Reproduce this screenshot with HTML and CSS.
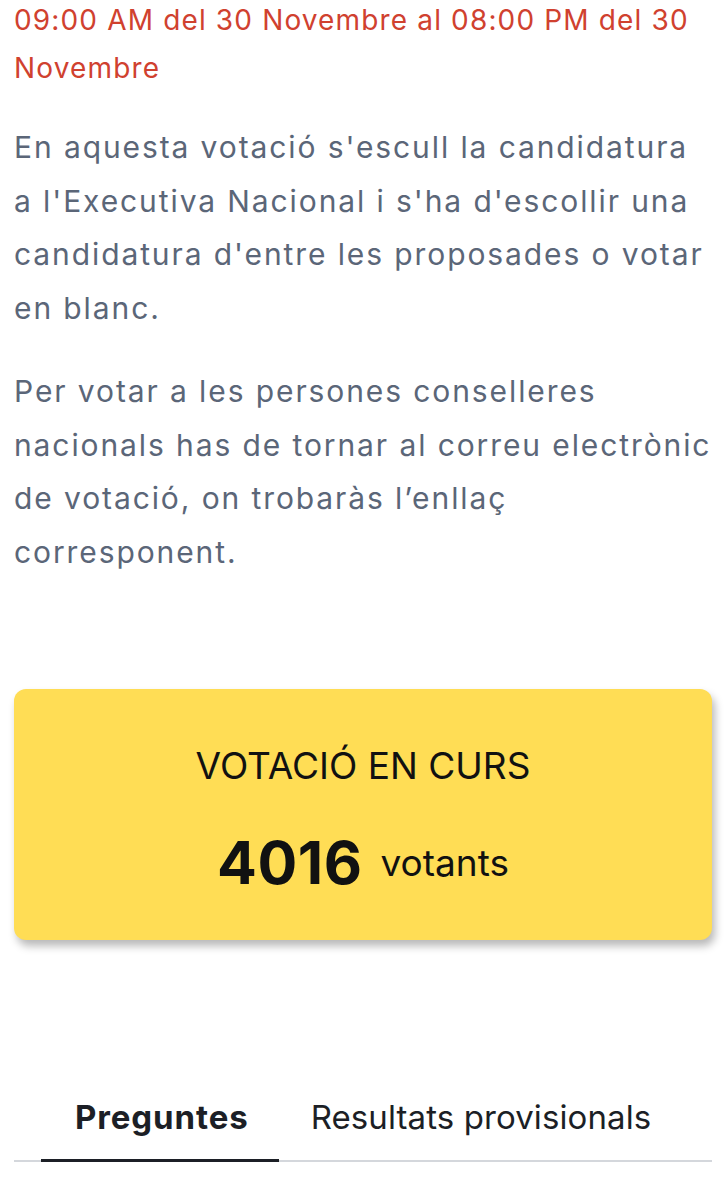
FILE: index.html
```html
<!DOCTYPE html>
<html lang="ca">
<head>
<meta charset="utf-8">
<title>Votació</title>
<link rel="stylesheet" href="styles.css">
</head>
<body>
<main class="page">
  <p class="schedule">09:00 AM del 30 Novembre al 08:00 PM del 30 Novembre</p>
  <p class="desc">En aquesta votació s'escull la candidatura a l'Executiva Nacional i s'ha d'escollir una candidatura d'entre les proposades o votar en blanc.</p>
  <p class="desc desc-second">Per votar a les persones conselleres nacionals has de tornar al correu electrònic de votació, on trobaràs l’enllaç corresponent.</p>
  <section class="status-card">
    <div class="status-title">VOTACIÓ EN CURS</div>
    <div class="status-count"><span class="count-num">4016</span><span class="count-label">votants</span></div>
  </section>
  <nav class="tabs">
    <div class="tab tab-active">Preguntes</div>
    <div class="tab">Resultats provisionals</div>
  </nav>
</main>
</body>
</html>
```

FILE: styles.css
```css
html, body {
  margin: 0;
  padding: 0;
  background: #ffffff;
}
body {
  font-family: Inter, "Liberation Sans", Arial, sans-serif;
  width: 725px;
  height: 1177px;
  overflow: hidden;
}
.page {
  padding: 0 13px 0 14px;
  margin-top: -4px;
}
.schedule {
  margin: 0;
  color: #d0412f;
  font-size: 28px;
  letter-spacing: 1.15px;
  line-height: 48px;
}
.desc {
  margin: 29px -2px 0 0;
  color: #5b6678;
  font-size: 30px;
  letter-spacing: 1.9px;
  line-height: 53.5px;
}
.desc-second {
  margin-top: 30px;
}
.status-card {
  margin-top: 110px;
  height: 251px;
  background: #ffdd55;
  border-radius: 12px;
  box-shadow: 3px 6px 8px rgba(0, 0, 0, 0.28);
  display: flex;
  flex-direction: column;
  align-items: center;
  color: #111111;
}
.status-title {
  margin-top: 55px;
  font-size: 37px;
  line-height: 44px;
}
.status-count {
  margin-top: 45px;
  display: flex;
  align-items: flex-end;
  gap: 18px;
}
.count-num {
  font-size: 59px;
  font-weight: 700;
  letter-spacing: 0.5px;
  line-height: 60px;
}
.count-label {
  font-size: 37px;
  line-height: 60px;
}
.tabs {
  margin-top: 145px;
  display: flex;
  border-bottom: 2px solid #d4d7dc;
  padding-left: 27px;
}
.tab {
  font-size: 33px;
  letter-spacing: 0.1px;
  line-height: 40px;
  padding: 12px 32px 22px 32px;
  color: #1c1f26;
}
.tab-active {
  font-weight: 700;
  letter-spacing: 0.9px;
  padding-left: 34px;
  padding-right: 30px;
  border-bottom: 3px solid #1c1f26;
  margin-bottom: -2px;
}
```
